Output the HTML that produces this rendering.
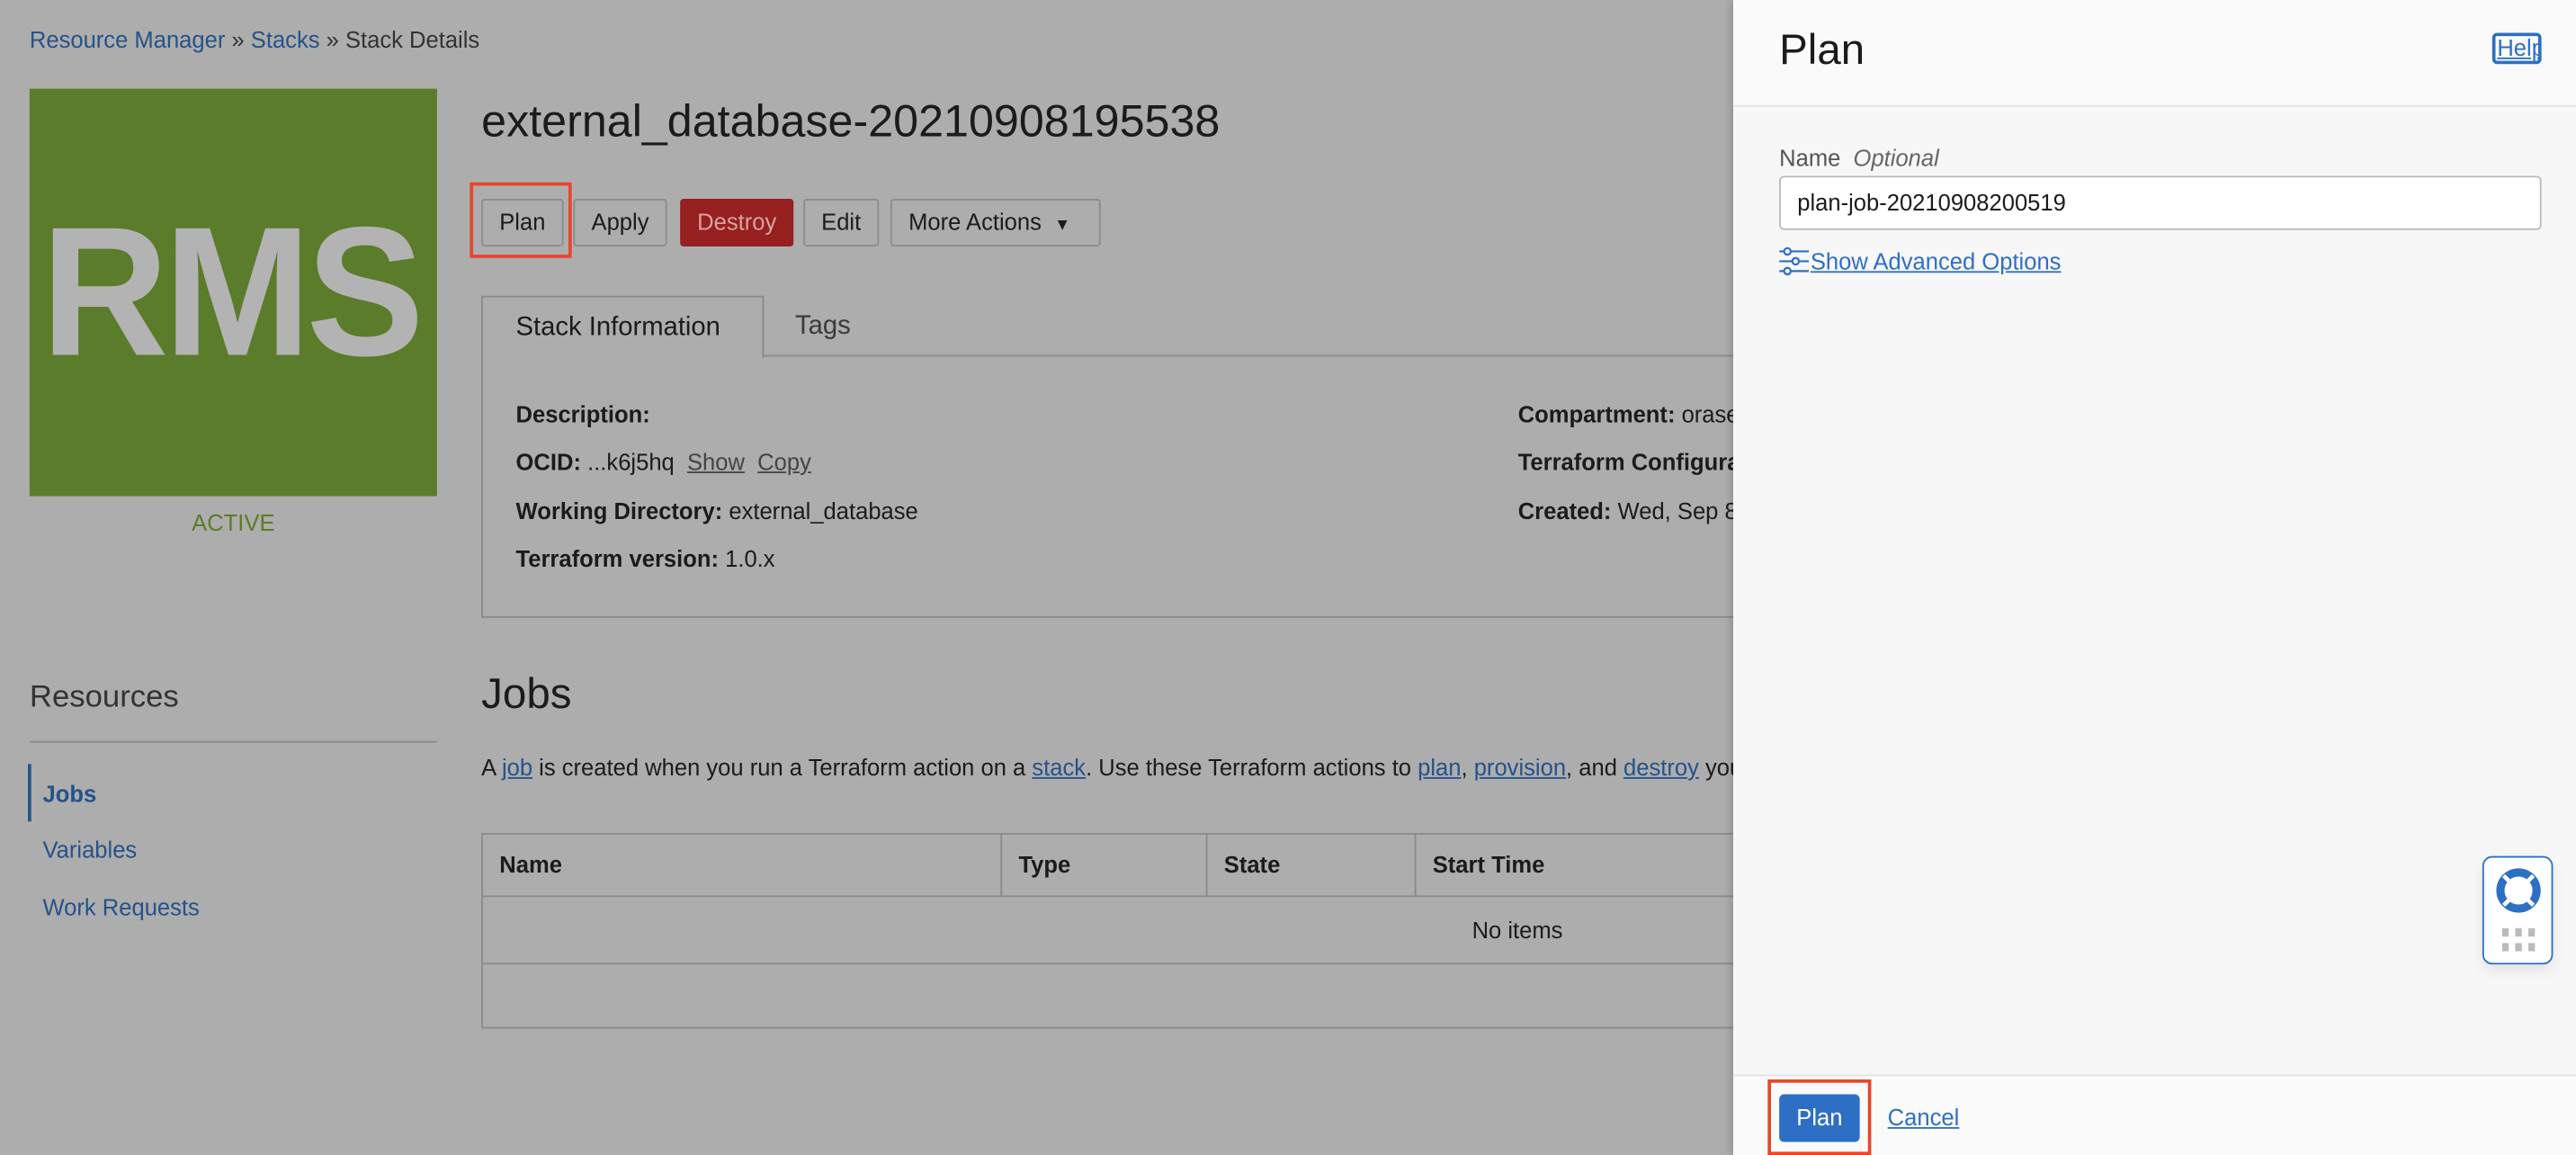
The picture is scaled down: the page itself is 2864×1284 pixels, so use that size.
<!DOCTYPE html>
<html><head><meta charset="utf-8"><style>
*{box-sizing:border-box;margin:0;padding:0}
html,body{width:2864px;height:1284px;overflow:hidden;background:#adadad}
#w{position:absolute;left:0;top:0;width:1568px;height:703px;transform:scale(1.82653);transform-origin:0 0;font-family:"Liberation Sans",sans-serif;color:#1b1b1b;font-size:14px}
.a{position:absolute;white-space:nowrap}
.lk{color:#24528a}
.btn{position:absolute;top:121px;height:29px;border:1px solid #8c8c8c;border-radius:2px;background:#adadad;font-size:14px;line-height:27px;text-align:center;color:#1b1b1b}
.ul{text-decoration:underline}
b{font-weight:bold}
</style></head><body><div id="w">
<div class="a" style="left:18px;top:16px"><span class="lk">Resource Manager</span> <span style="color:#333">»</span> <span class="lk">Stacks</span> <span style="color:#333">» Stack Details</span></div>
<div class="a" style="left:18px;top:54px;width:248px;height:248px;background:#5b7c2a;overflow:hidden"><div class="a" style="left:7px;top:68px;font-size:112px;line-height:1;font-weight:bold;color:#b3b3b3;letter-spacing:-3px;transform:scaleX(0.96);transform-origin:0 0">RMS</div></div>
<div class="a" style="left:18px;width:248px;text-align:center;top:310px;color:#5b7c2a">ACTIVE</div>
<div class="a" style="left:293px;top:58px;font-size:27.5px;color:#1b1b1b">external_database-20210908195538</div>
<div class="btn" style="left:293px;width:50px">Plan</div>
<div class="btn" style="left:349px;width:57px">Apply</div>
<div class="btn" style="left:414px;width:69px;background:#95201f;border-color:#95201f;color:#d9a0a0">Destroy</div>
<div class="btn" style="left:489px;width:46px">Edit</div>
<div class="btn" style="left:542px;width:128px;text-align:left;padding-left:10px">More Actions &nbsp;<span style="font-size:10px">▼</span></div>
<div class="a" style="left:286px;top:111px;width:62px;height:46px;border:2px solid #e8452c"></div>
<div class="a" style="left:293px;top:217px;width:800px;height:159px;border:1px solid #8a8a8a;border-top:none"></div>
<div class="a" style="left:464px;top:216px;width:600px;border-top:1px solid #8a8a8a"></div>
<div class="a" style="left:293px;top:180px;width:172px;height:38px;border:1px solid #8a8a8a;border-bottom:none;background:#adadad;font-size:16px;line-height:38px;padding-left:20px">Stack Information</div>
<div class="a" style="left:484px;top:190px;font-size:16px;color:#3a3a3a">Tags</div>
<div class="a" style="left:314px;top:244px"><b>Description:</b></div>
<div class="a" style="left:314px;top:273px"><b>OCID:</b> ...k6j5hq &nbsp;<span class="ul" style="color:#444">Show</span> &nbsp;<span class="ul" style="color:#444">Copy</span></div>
<div class="a" style="left:314px;top:303px"><b>Working Directory:</b> external_database</div>
<div class="a" style="left:314px;top:332px"><b>Terraform version:</b> 1.0.x</div>
<div class="a" style="left:924px;top:244px"><b>Compartment:</b> orasenatdpltintegration03</div>
<div class="a" style="left:924px;top:273px"><b>Terraform Configuration</b></div>
<div class="a" style="left:924px;top:303px"><b>Created:</b> Wed, Sep 8, 2021</div>
<div class="a" style="left:18px;top:414px;font-size:19px;color:#333">Resources</div>
<div class="a" style="left:18px;top:451px;width:248px;border-top:1px solid #8a8a8a"></div>
<div class="a" style="left:17px;top:465px;height:35px;border-left:2px solid #24528a"></div>
<div class="a lk" style="left:26px;top:475px;font-weight:bold">Jobs</div>
<div class="a lk" style="left:26px;top:509px">Variables</div>
<div class="a lk" style="left:26px;top:544px">Work Requests</div>
<div class="a" style="left:293px;top:407px;font-size:26px">Jobs</div>
<div class="a" style="left:293px;top:459px">A <span class="lk ul">job</span> is created when you run a Terraform action on a <span class="lk ul">stack</span>. Use these Terraform actions to <span class="lk ul">plan</span>, <span class="lk ul">provision</span>, and <span class="lk ul">destroy</span> your resources.</div>
<div class="a" style="left:293px;top:507px;width:800px;height:119px;border:1px solid #8a8a8a"></div>
<div class="a" style="left:293px;top:545px;width:800px;border-top:1px solid #8a8a8a"></div>
<div class="a" style="left:293px;top:586px;width:800px;border-top:1px solid #8a8a8a"></div>
<div class="a" style="left:609px;top:507px;height:38px;border-left:1px solid #8a8a8a"></div>
<div class="a" style="left:734px;top:507px;height:38px;border-left:1px solid #8a8a8a"></div>
<div class="a" style="left:861px;top:507px;height:38px;border-left:1px solid #8a8a8a"></div>
<div class="a" style="left:304px;top:518px"><b>Name</b></div>
<div class="a" style="left:620px;top:518px"><b>Type</b></div>
<div class="a" style="left:745px;top:518px"><b>State</b></div>
<div class="a" style="left:872px;top:518px"><b>Start Time</b></div>
<div class="a" style="left:896px;top:558px">No items</div>

<div class="a" style="left:1055px;top:0;width:513px;height:703px;background:#f7f7f7;box-shadow:-2px 0 4px rgba(0,0,0,.15)">
 <div class="a" style="left:0;top:0;width:513px;height:65px;background:#fafafa;border-bottom:1px solid #e2e2e2"></div>
 <div class="a" style="left:28px;top:15px;font-size:26px;color:#1b1b1b">Plan</div>
 <div class="a" style="left:462px;top:20px;width:30px;height:19px;border:2px solid #2d6fc5;border-radius:3px;color:#2d6fc5;font-size:14px;line-height:15px;text-decoration:underline;padding-left:1px;overflow:hidden">Help</div>
 <div class="a" style="left:28px;top:88px;color:#555">Name &nbsp;<i style="color:#666">Optional</i></div>
 <div class="a" style="left:28px;top:107px;width:464px;height:33px;background:#fff;border:1px solid #b8bcc0;border-radius:3px;padding-left:10px;line-height:31px">plan-job-20210908200519</div>
 <svg class="a" style="left:28px;top:150px" width="19" height="18" viewBox="0 0 19 18" fill="none" stroke="#2d6fc5" stroke-width="1.2"><line x1="0" y1="3" x2="3" y2="3"/><circle cx="5" cy="3" r="2"/><line x1="7" y1="3" x2="18" y2="3"/><line x1="0" y1="9" x2="8" y2="9"/><circle cx="10" cy="9" r="2"/><line x1="12" y1="9" x2="18" y2="9"/><line x1="0" y1="15" x2="3" y2="15"/><circle cx="5" cy="15" r="2"/><line x1="7" y1="15" x2="18" y2="15"/></svg>
 <div class="a ul" style="left:47px;top:151px;color:#2d6fc5">Show Advanced Options</div>
 <div class="a" style="left:456px;top:521px;width:43px;height:66px;background:#fff;border:1px solid #2d6fc5;border-radius:6px;box-shadow:0 4px 8px rgba(0,0,0,.08)">
  <svg class="a" style="left:6px;top:5px" width="30" height="30" viewBox="0 0 30 30"><circle cx="15" cy="15" r="11" fill="none" stroke="#2d6fc5" stroke-width="5"/><circle cx="15" cy="15" r="7" fill="#fff"/><g stroke="#fff" stroke-width="2.5"><line x1="6" y1="6" x2="10" y2="10"/><line x1="24" y1="6" x2="20" y2="10"/><line x1="6" y1="24" x2="10" y2="20"/><line x1="24" y1="24" x2="20" y2="20"/></g></svg>
  <svg class="a" style="left:11px;top:43px" width="21" height="14"><g fill="#b8bcc0"><rect x="0" y="0" width="4" height="5"/><rect x="8" y="0" width="4" height="5"/><rect x="16" y="0" width="4" height="5"/><rect x="0" y="9" width="4" height="5"/><rect x="8" y="9" width="4" height="5"/><rect x="16" y="9" width="4" height="5"/></g></svg>
 </div>
 <div class="a" style="left:0;top:654px;width:513px;height:49px;background:#fafafa;border-top:1px solid #e2e2e2"></div>
 <div class="a" style="left:21px;top:657px;width:63px;height:46px;border:2px solid #e8452c"></div>
 <div class="a" style="left:28px;top:666px;width:49px;height:29px;background:#2d6fc5;border-radius:3px;color:#fff;text-align:center;line-height:29px">Plan</div>
 <div class="a ul" style="left:94px;top:672px;color:#2d6fc5">Cancel</div>
</div>
</div></body></html>
